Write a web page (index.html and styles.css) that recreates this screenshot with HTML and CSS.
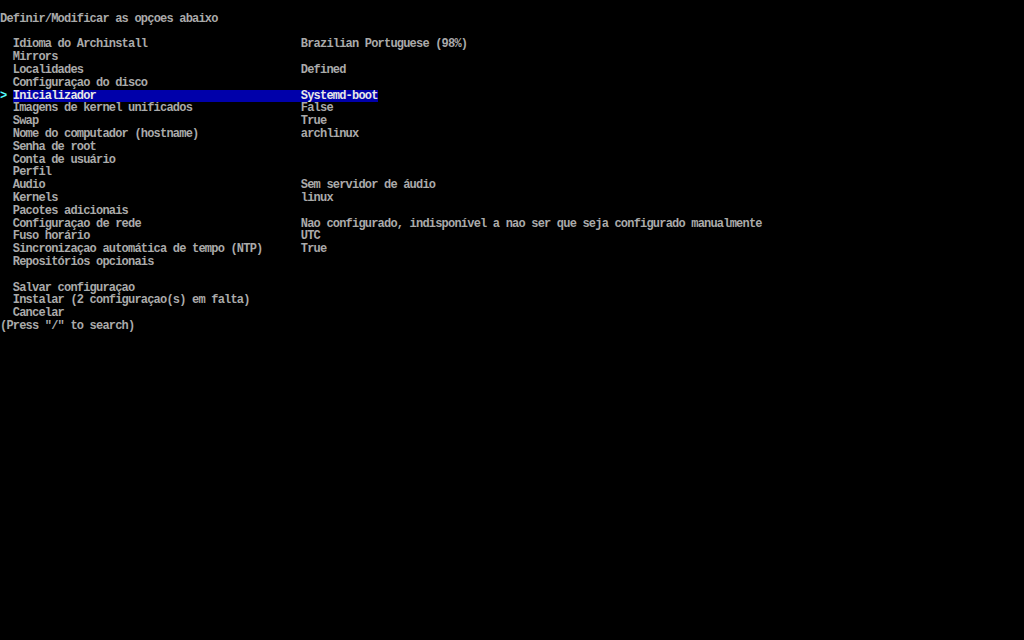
FILE: index.html
```html
<!DOCTYPE html>
<html lang="pt-BR">
<head>
    <meta charset="UTF-8">
    <title>archinstall</title>
    <link rel="stylesheet" href="styles.css">
</head>
<body>
<div class="screen">
    <div class="line">Definir/Modificar as opçoes abaixo</div>
    <div class="line"></div>

    <div class="menu">
        <div class="row"><span class="cursor"></span><span class="item"><span class="label">Idioma do Archinstall</span><span class="value">Brazilian Portuguese (98%)</span></span></div>
        <div class="row"><span class="cursor"></span><span class="item"><span class="label">Mirrors</span></span></div>
        <div class="row"><span class="cursor"></span><span class="item"><span class="label">Localidades</span><span class="value">Defined</span></span></div>
        <div class="row"><span class="cursor"></span><span class="item"><span class="label">Configuraçao do disco</span></span></div>
        <div class="row active"><span class="cursor">&gt;</span><span class="item"><span class="label">Inicializador</span><span class="value">Systemd-boot</span></span></div>
        <div class="row"><span class="cursor"></span><span class="item"><span class="label">Imagens de kernel unificados</span><span class="value">False</span></span></div>
        <div class="row"><span class="cursor"></span><span class="item"><span class="label">Swap</span><span class="value">True</span></span></div>
        <div class="row"><span class="cursor"></span><span class="item"><span class="label">Nome do computador (hostname)</span><span class="value">archlinux</span></span></div>
        <div class="row"><span class="cursor"></span><span class="item"><span class="label">Senha de root</span></span></div>
        <div class="row"><span class="cursor"></span><span class="item"><span class="label">Conta de usuário</span></span></div>
        <div class="row"><span class="cursor"></span><span class="item"><span class="label">Perfil</span></span></div>
        <div class="row"><span class="cursor"></span><span class="item"><span class="label">Audio</span><span class="value">Sem servidor de áudio</span></span></div>
        <div class="row"><span class="cursor"></span><span class="item"><span class="label">Kernels</span><span class="value">linux</span></span></div>
        <div class="row"><span class="cursor"></span><span class="item"><span class="label">Pacotes adicionais</span></span></div>
        <div class="row"><span class="cursor"></span><span class="item"><span class="label">Configuraçao de rede</span><span class="value">Nao configurado, indisponível a nao ser que seja configurado manualmente</span></span></div>
        <div class="row"><span class="cursor"></span><span class="item"><span class="label">Fuso horário</span><span class="value">UTC</span></span></div>
        <div class="row"><span class="cursor"></span><span class="item"><span class="label">Sincronizaçao automática de tempo (NTP)</span><span class="value">True</span></span></div>
        <div class="row"><span class="cursor"></span><span class="item"><span class="label">Repositórios opcionais</span></span></div>
        <div class="line"></div>
        <div class="row"><span class="cursor"></span><span class="item">Salvar configuraçao</span></div>
        <div class="row"><span class="cursor"></span><span class="item">Instalar (2 configuraçao(s) em falta)</span></div>
        <div class="row"><span class="cursor"></span><span class="item">Cancelar</span></div>
    </div>

    <div class="line">(Press "/" to search)</div>
</div>
</body>
</html>
```

FILE: styles.css
```css
/* console grid: 160 x 50 cells, 6.4 x 12.8 px each */
:root {
    --cell-w: 6.4px;
    --cell-h: 12.8px;
    --fg: #aaaaaa;
    --fg-bright: #e8e8e8;
    --sel-bg: #0000aa;
    --cursor: #55ffff;
}

html, body {
    margin: 0;
    padding: 0;
    height: 100%;
    background-color: #000;
    overflow: hidden;
}

.screen {
    padding-top: var(--cell-h);
    font-family: "Liberation Mono", "DejaVu Sans Mono", monospace;
    font-size: 12px;
    font-weight: bold;
    letter-spacing: -0.8px;
    line-height: var(--cell-h);
    color: var(--fg);
    white-space: nowrap;
}

.line {
    height: var(--cell-h);
}

.row {
    display: flex;
    height: var(--cell-h);
}

.cursor {
    width: calc(var(--cell-w) * 2);
    color: var(--cursor);
}

.item {
    display: flex;
}

.label {
    width: calc(var(--cell-w) * 45);
}

.row.active .item {
    background-color: var(--sel-bg);
    color: var(--fg-bright);
}
```
